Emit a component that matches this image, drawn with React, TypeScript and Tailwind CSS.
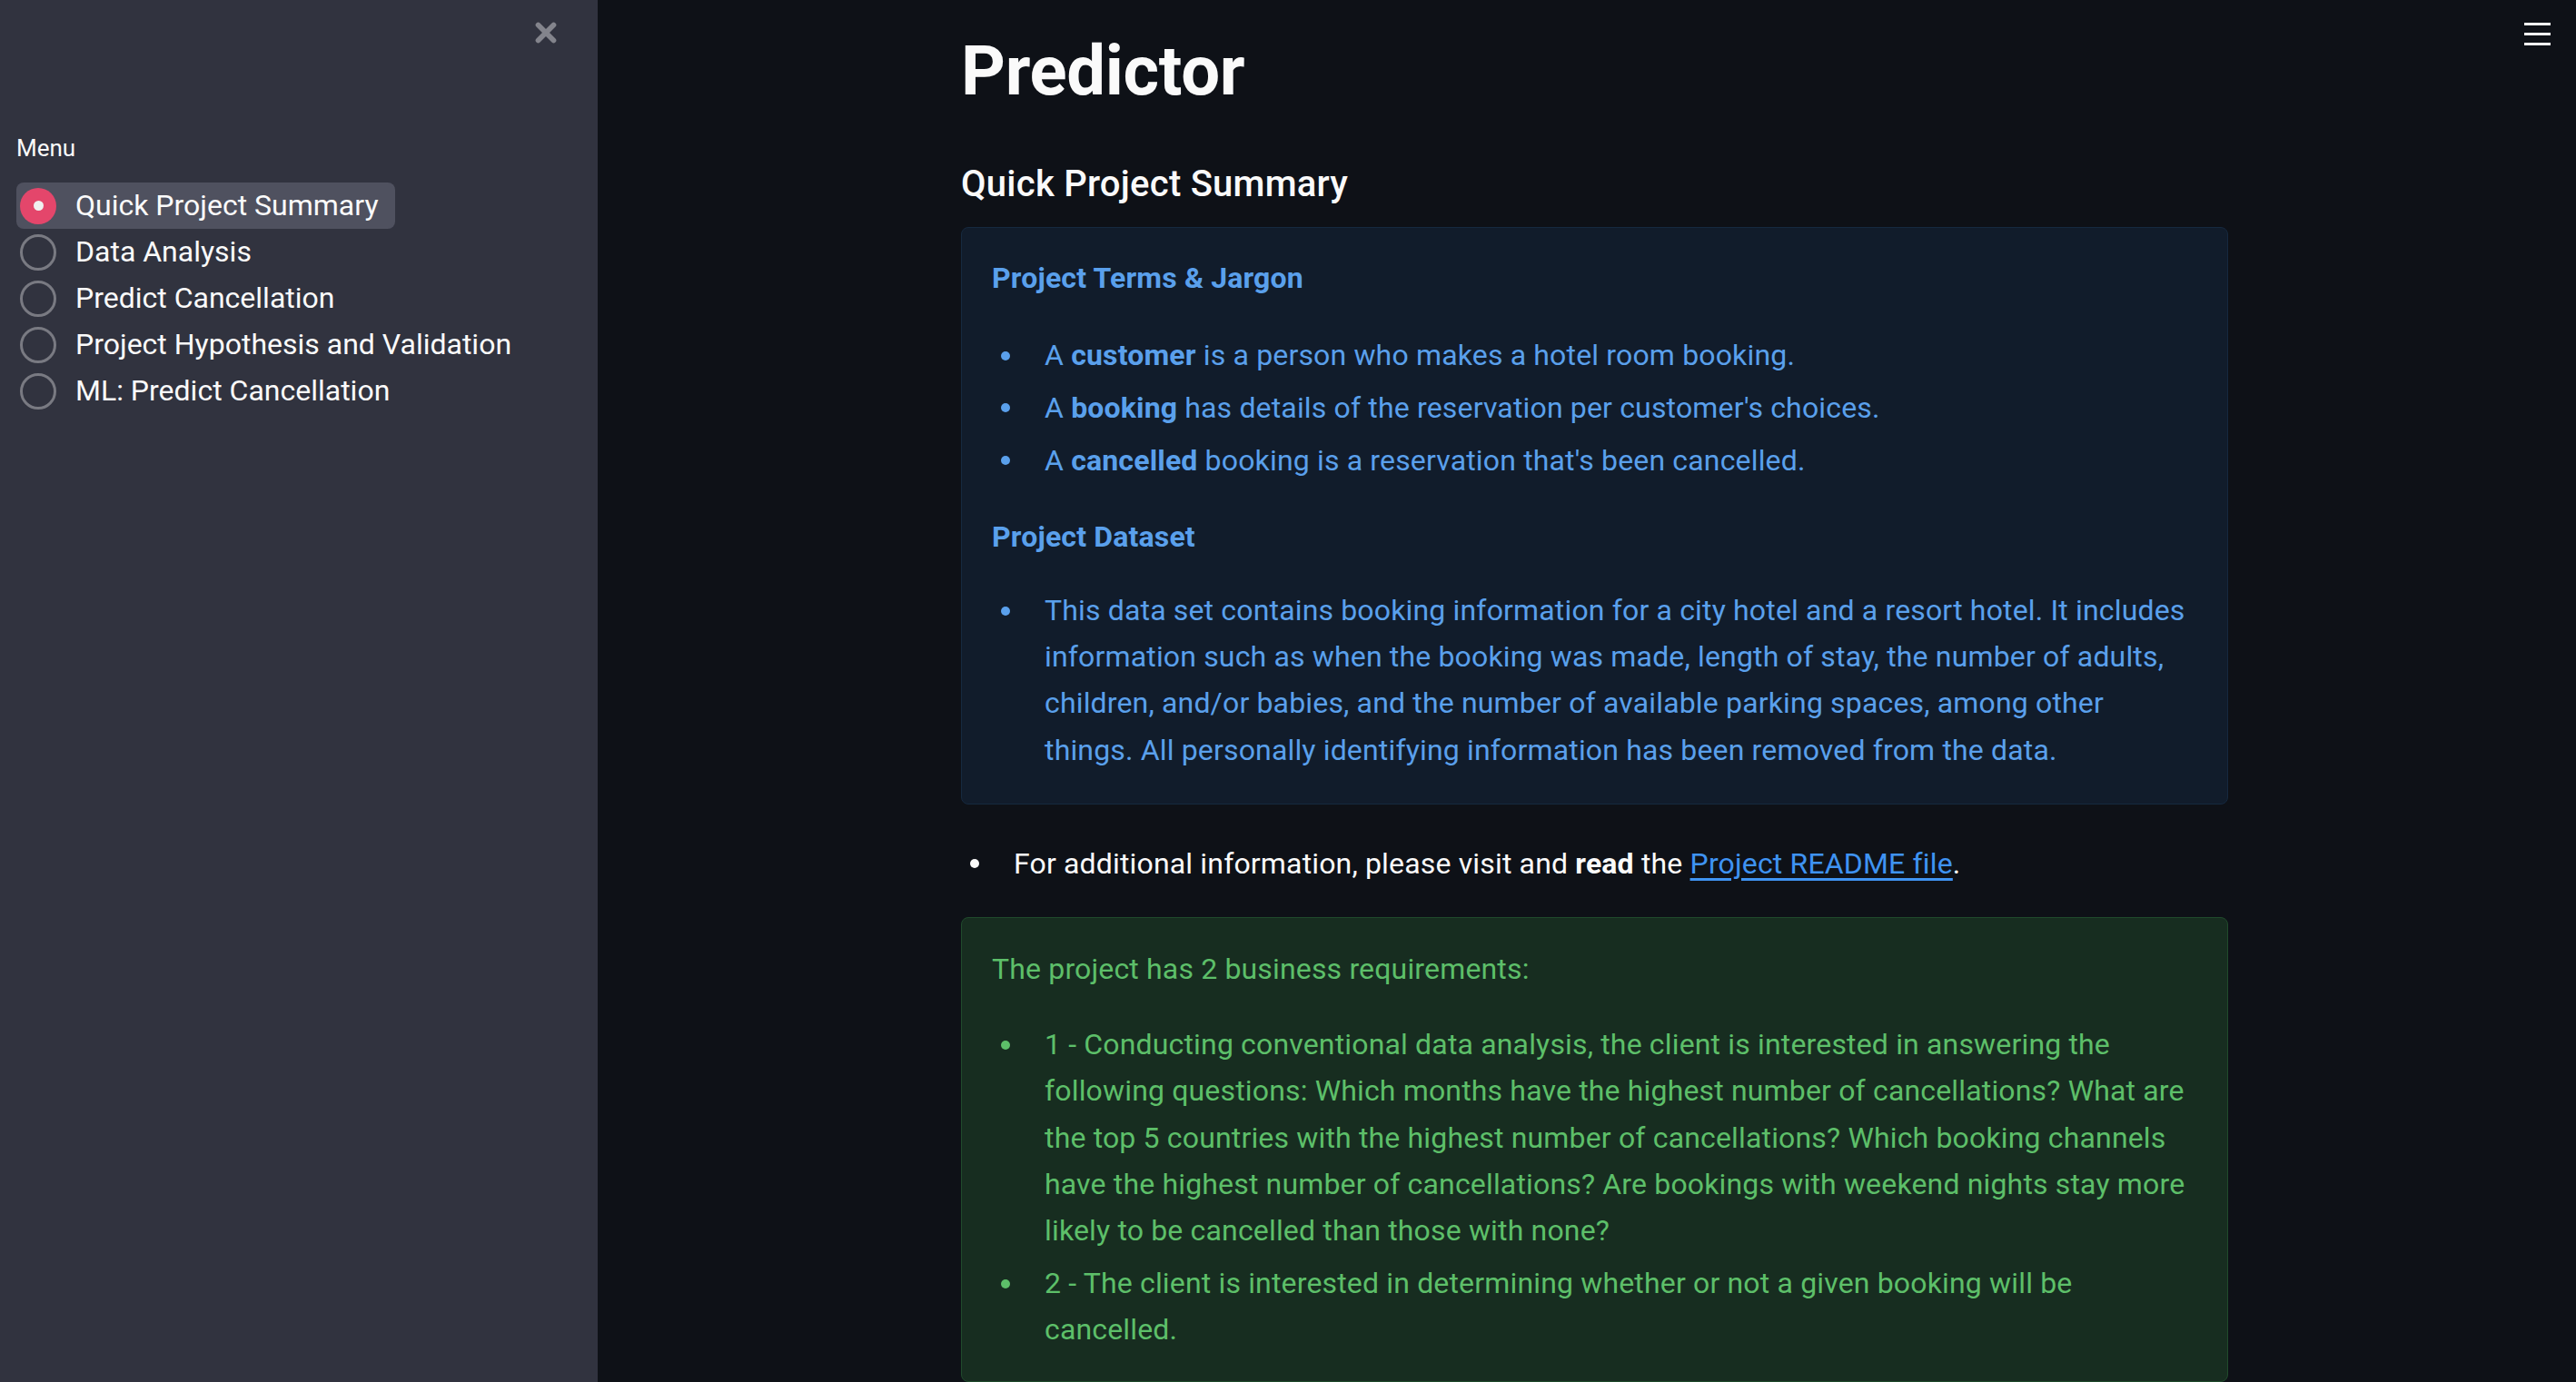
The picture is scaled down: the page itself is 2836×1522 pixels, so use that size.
import { X } from "lucide-react";

const MENU = [
  "Quick Project Summary",
  "Data Analysis",
  "Predict Cancellation",
  "Project Hypothesis and Validation",
  "ML: Predict Cancellation",
];

function Bullet({ color, children }: { color: string; children: React.ReactNode }) {
  return (
    <li className="flex">
      <span className="flex h-[51px] w-[58px] shrink-0 items-center pl-[10px]">
        <span className={`h-[10px] w-[10px] rounded-full ${color}`} />
      </span>
      <span className="min-w-0 flex-1">{children}</span>
    </li>
  );
}

export default function App() {
  return (
    <div className="flex h-[1522px] w-full overflow-hidden bg-[#0e1117] font-['Roboto',sans-serif] text-[32px] leading-[51.2px] text-[#fafafa]">
      {/* sidebar */}
      <aside className="relative w-[658px] shrink-0 bg-[#31333f]">
        <button className="absolute left-[584px] top-[19px] text-[#83848c]">
          <X className="h-[34px] w-[34px]" strokeWidth={4} />
        </button>
        <div className="pl-[18px] pt-[148px]">
          <p className="text-[26px] leading-[30px] text-[#fafafa]">Menu</p>
          <div className="mt-[23px] flex flex-col items-start">
            {MENU.map((m, i) => (
              <div
                key={m}
                className={`flex h-[51px] items-center rounded-lg pl-[4px] pr-[18px] ${i === 0 ? "bg-[#4f515f]" : ""}`}
              >
                {i === 0 ? (
                  <span className="flex h-[40px] w-[40px] items-center justify-center rounded-full bg-[#e4466b]">
                    <span className="h-[11px] w-[11px] rounded-full bg-[#f0f0f0]" />
                  </span>
                ) : (
                  <span className="h-[40px] w-[40px] rounded-full border-[3.5px] border-[#797a82]" />
                )}
                <span className="ml-[21px] whitespace-nowrap">{m}</span>
              </div>
            ))}
          </div>
        </div>
      </aside>

      {/* main */}
      <main className="relative flex-1">
        <div className="absolute right-[28px] top-[25px] flex w-[29px] flex-col gap-[8px]">
          <span className="h-[3px] bg-[#fafafa]" />
          <span className="h-[3px] bg-[#fafafa]" />
          <span className="h-[3px] bg-[#fafafa]" />
        </div>

        <div className="ml-[400px] w-[1395px] pt-[32px] tracking-[0.16px]">
          <h1 className="text-[76px] font-bold leading-[92px] tracking-[-0.3px]">Predictor</h1>
          <h2 className="mt-[53px] text-[40px] font-medium leading-[52px] tracking-[0.25px]">Quick Project Summary</h2>

          <div className="mt-[21px] rounded-lg border border-[#16293f] bg-[#111c2b] pb-[33px] pl-[33px] pr-[39px] pt-[30px] text-[#5aa0ec]">
            <p className="font-bold">Project Terms &amp; Jargon</p>
            <ul className="mt-[34px] flex flex-col gap-[6.5px]">
              <Bullet color="bg-[#5aa0ec]">
                A <b>customer</b> is a person who makes a hotel room booking.
              </Bullet>
              <Bullet color="bg-[#5aa0ec]">
                A <b>booking</b> has details of the reservation per customer's choices.
              </Bullet>
              <Bullet color="bg-[#5aa0ec]">
                A <b>cancelled</b> booking is a reservation that's been cancelled.
              </Bullet>
            </ul>
            <p className="mt-[33px] font-bold">Project Dataset</p>
            <ul className="mt-[30px]">
              <Bullet color="bg-[#5aa0ec]">
                This data set contains booking information for a city hotel and a resort hotel. It includes
                information such as when the booking was made, length of stay, the number of adults,
                children, and/or babies, and the number of available parking spaces, among other things. All
                personally identifying information has been removed from the data.
              </Bullet>
            </ul>
          </div>

          <ul className="mt-[40px]">
            <Bullet color="bg-[#fafafa]">
              For additional information, please visit and <b>read</b> the{" "}
              <a href="#" className="text-[#3f93f2] underline underline-offset-[5px]">
                Project README file
              </a>
              .
            </Bullet>
          </ul>

          <div className="mt-[33px] rounded-lg border border-[#204a2c] bg-[#172d20] pb-[30px] pl-[33px] pr-[39px] pt-[31px] text-[#5dbf69]">
            <p>The project has 2 business requirements:</p>
            <ul className="mt-[32px] flex flex-col gap-[7px]">
              <Bullet color="bg-[#5dbf69]">
                1 - Conducting conventional data analysis, the client is interested in answering the following
                questions: Which months have the highest number of cancellations? What are the top 5
                countries with the highest number of cancellations? Which booking channels have the highest
                number of cancellations? Are bookings with weekend nights stay more likely to be cancelled
                than those with none?
              </Bullet>
              <Bullet color="bg-[#5dbf69]">
                2 - The client is interested in determining whether or not a given booking will be cancelled.
              </Bullet>
            </ul>
          </div>
        </div>
      </main>
    </div>
  );
}
